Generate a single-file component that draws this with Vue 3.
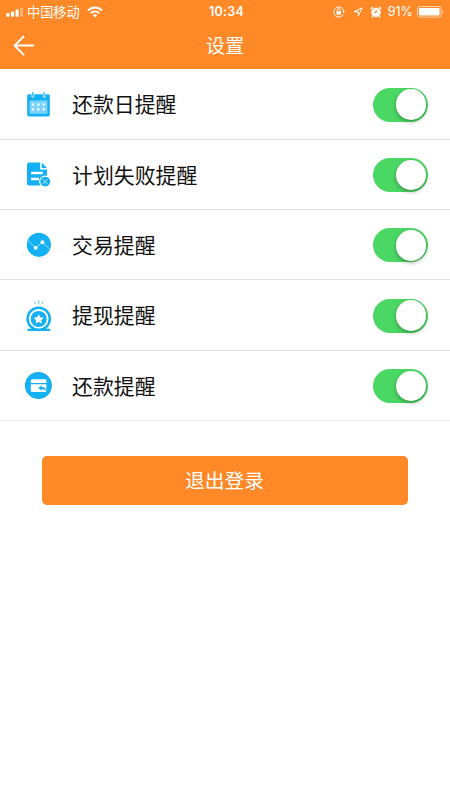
<script setup>
import { ref } from 'vue'

const rows = ref([
  { icon: 'calendar', label: '还款日提醒', on: true },
  { icon: 'plan', label: '计划失败提醒', on: true },
  { icon: 'trade', label: '交易提醒', on: true },
  { icon: 'withdraw', label: '提现提醒', on: true },
  { icon: 'repay', label: '还款提醒', on: true },
])
</script>

<template>
  <div class="screen">
    <header class="header">
      <div class="status">
        <div class="side">
          <svg class="signal" width="18" height="10" viewBox="0 0 18 10">
            <g fill="#fff">
              <rect x="0.3" y="6" width="3.2" height="3.8" rx="0.8" />
              <rect x="4.9" y="4.6" width="3.2" height="5.2" rx="0.8" />
              <rect x="9.5" y="2.6" width="3.2" height="7.2" rx="0.8" />
              <rect x="14.1" y="0.4" width="3" height="9.4" rx="0.8" opacity=".35" />
            </g>
          </svg>
          <span class="carrier">中国移动</span>
          <svg class="wifi" width="16" height="12" viewBox="0 0 16 12" fill="none" stroke="#fff" stroke-width="2">
            <path d="M1 4.6C5 .6 11 .6 15 4.6" />
            <path d="M3.8 7.3c2.4-2.3 6-2.3 8.4 0" />
            <path d="M5.8 9 8 11.4 10.2 9C9 7.9 7 7.9 5.8 9Z" fill="#fff" stroke="none" />
          </svg>
        </div>
        <span class="time">10:34</span>
        <div class="side right">
          <svg width="12" height="12" viewBox="0 0 12 12" fill="none" stroke="#fff">
            <path d="M10.2 8.4A5 5 0 1 1 10.6 4.6" />
            <path d="M9.2 5h2.8l-1.4 2Z" fill="#fff" stroke="none" />
            <rect x="3.5" y="5.2" width="4.4" height="3.4" fill="#fff" stroke="none" />
            <path d="M4.3 5.4V4a1.4 1.4 0 0 1 2.8 0v1.4" stroke-width=".9" />
          </svg>
          <svg class="arrow" width="10" height="10" viewBox="0 0 10 10" fill="none" stroke="#fff" stroke-linejoin="round">
            <path d="M9.2.8.8 4.7h4.4v4.4Z" />
          </svg>
          <svg class="alarm" width="12" height="12" viewBox="0 0 12 12">
            <circle cx="6" cy="6.4" r="4.7" fill="#fff" />
            <path d="M.8 3 3 1M11.2 3 9 1M3 10.2l-1 1.2M9 10.2l1 1.2" stroke="#fff" stroke-width="1.5" />
            <path d="M6.2 3.6v3H3.8" fill="none" stroke="#ff8827" />
          </svg>
          <span class="percent">91%</span>
          <svg class="battery" width="28" height="12" viewBox="0 0 28 12">
            <rect x=".5" y=".5" width="23.6" height="10.6" rx="2" fill="none" stroke="#fff" stroke-opacity=".65" />
            <rect x="2" y="2" width="20.6" height="7.6" rx=".8" fill="#fff" />
            <path d="M25.3 4c1.5.4 1.5 3.2 0 3.6Z" fill="#fff" opacity=".6" />
          </svg>
        </div>
      </div>
      <div class="nav">
        <svg class="back" width="22" height="22" viewBox="0 0 22 22" fill="none" stroke="#fff" stroke-width="2" stroke-linecap="round" stroke-linejoin="round">
          <path d="M11.5 1.6 2.6 10.6l8.9 9M2.6 10.6h18.7" />
        </svg>
        <h1 class="title">设置</h1>
      </div>
    </header>

    <main>
      <div v-for="row in rows" :key="row.icon" class="row">
        <svg class="icon" width="30" height="30" viewBox="0 0 30 30">
          <g v-if="row.icon === 'calendar'">
            <rect x="4.2" y="4.2" width="22.6" height="22.2" rx="1.6" fill="#13b1f3" />
            <rect x="6.6" y="10.4" width="17.8" height="13.4" rx=".6" fill="#7dd3f8" />
            <g fill="#e6f8ff">
              <circle v-for="n in 6" :key="n" :cx="10 + ((n - 1) % 3) * 5.4" :cy="n > 3 ? 19.4 : 14.6" r="1.3" />
            </g>
            <path d="M9.8 3.6v2.8M21.2 3.6v2.8" stroke="#d9f4ff" stroke-width="2.8" stroke-linecap="round" />
            <path d="M9.8 2.8v3.2M21.2 2.8v3.2" stroke="#4fc2f4" stroke-width="1.7" stroke-linecap="round" />
          </g>
          <g v-else-if="row.icon === 'plan'">
            <path d="M6 2.6h11.2v6.8h6.8v16H6a2 2 0 0 1-2-2V4.6a2 2 0 0 1 2-2Z" fill="#13b1f3" />
            <path d="m18.8 2.8 5.2 5.2h-5.2Z" fill="#13b1f3" />
            <path d="M8 13h11.8M8 19h8" stroke="#fff" stroke-width="2.3" />
            <circle cx="22.2" cy="21.6" r="5.5" fill="#13b1f3" stroke="#fff" stroke-width="1.1" />
            <path d="m19.8 19.2 4.8 4.8m0-4.8L19.8 24" stroke="#b5e8fc" stroke-width="1" />
          </g>
          <g v-else-if="row.icon === 'trade'">
            <circle cx="15.9" cy="14.8" r="12.1" fill="#13b1f3" />
            <path d="m4.8 10.4 7.9 7.4 6.6-5.6 7.2 6.8" fill="none" stroke="#a5e2fb" stroke-width=".9" />
            <circle cx="12.7" cy="17.8" r="1.9" fill="#fff" />
            <circle cx="19.4" cy="12.2" r="1.9" fill="#fff" />
          </g>
          <g v-else-if="row.icon === 'withdraw'">
            <path d="M5 29.6v-1.2h3v-1.2h15.4v1.2h3v1.2Z" fill="#13b1f3" />
            <circle cx="15.7" cy="17.8" r="11.1" fill="#fff" stroke="#13b1f3" stroke-width="2.5" />
            <circle cx="15.7" cy="18" r="8" fill="#13b1f3" />
            <path d="m15.7 13.2 1.6 3.1 3.4.5-2.4 2.4.5 3.4-3.1-1.6-3.1 1.6.5-3.4-2.4-2.4 3.4-.5Z" fill="#fff" />
            <path d="M15.7-.8v4M11.4.8l.9 2.2M20 .8l-.9 2.2" stroke="#58c8f5" stroke-width="1" />
            <path d="M5.2 28.8h21.2" stroke="#13b1f3" stroke-width="2.2" stroke-linecap="round" />
          </g>
          <g v-else>
            <circle cx="15.4" cy="14.5" r="13.5" fill="#13b1f3" />
            <path d="M9.2 8.3h12.8a1.4 1.4 0 0 1 1.4 1.4V12H7.8V9.7a1.4 1.4 0 0 1 1.4-1.4Z" fill="#fff" />
            <path d="M7.8 13.3h15.6v6.4a1.4 1.4 0 0 1-1.4 1.4H9.2a1.4 1.4 0 0 1-1.4-1.4Z" fill="#fff" />
            <path d="m15.2 17 3.5-2.5V16c2.8.1 4.4 1.3 4.8 4.1-1.4-1.5-2.8-1.9-4.8-1.8v1.2Z" fill="#13b1f3" />
          </g>
        </svg>
        <span class="label">{{ row.label }}</span>
        <button class="switch" :class="{ on: row.on }" role="switch" :aria-checked="row.on" @click="row.on = !row.on">
          <span class="knob"></span>
        </button>
      </div>
      <button class="logout">退出登录</button>
    </main>
  </div>
</template>

<style>
body {
  margin: 0;
  background: #fff;
}
</style>

<style scoped>
.screen {
  width: 450px;
  height: 800px;
  overflow: hidden;
  background: #fff;
  font-family: "Liberation Sans", "Noto Sans CJK SC", sans-serif;
}
svg {
  display: block;
  flex: none;
  overflow: visible;
}
.header {
  height: 69.4px;
  background: #ff8827;
  color: #fff;
}
.status {
  display: grid;
  grid-template-columns: 1fr auto 1fr;
  align-items: center;
  height: 22px;
  padding: 0 5px 0 6px;
}
.side {
  display: flex;
  align-items: center;
  height: 22px;
}
.right {
  justify-content: flex-end;
}
.signal {
  margin-top: 1px;
}
.carrier {
  margin-left: 3px;
  font: 13.2px/22px "Noto Sans CJK SC", sans-serif;
}
.wifi {
  margin-left: 7px;
}
.time {
  padding: 1px 0 0 2px;
  font: 600 12.5px/22px Inter, sans-serif;
  letter-spacing: 0.25px;
}
.arrow {
  margin-left: 8px;
}
.alarm {
  margin-left: 7px;
}
.percent {
  margin-left: 6px;
  padding-top: 1px;
  font: 12.6px/22px Inter, sans-serif;
}
.battery {
  margin-left: 4px;
}
.nav {
  display: grid;
  grid-template-columns: 22px 1fr 22px;
  align-items: center;
  height: 47px;
  padding: 0 12px;
}
.title {
  margin: 0;
  text-align: center;
  font: 400 19.3px/47px "Noto Sans CJK SC", sans-serif;
}
.row {
  display: flex;
  align-items: center;
  box-sizing: border-box;
  height: 70.35px;
  padding: 1px 22px 0 23px;
  border-bottom: 1px solid #dedede;
}
.row:nth-child(5) {
  border-bottom-color: #ececec;
}
.label {
  flex: 1;
  margin: 0 0 2.4px 19px;
  color: #111;
  font: 20.9px/30px "Noto Sans CJK SC", sans-serif;
}
.switch {
  display: flex;
  align-items: center;
  box-sizing: border-box;
  width: 55.5px;
  height: 34px;
  padding: 0 1.6px;
  border: 0;
  border-radius: 17px;
  background: #ddd;
}
.switch.on {
  justify-content: flex-end;
  background: #4bd763;
}
.knob {
  width: 30.6px;
  height: 30.6px;
  border-radius: 50%;
  background: #fff;
  box-shadow: 0 2px 4px rgba(0, 0, 0, 0.3);
}
.logout {
  display: block;
  width: 366px;
  height: 49px;
  margin: 35.2px 0 0 42px;
  padding: 0 1px 1px 0;
  border: 0;
  border-radius: 5px;
  background: #ff8827;
  color: #fff;
  font: 19.8px/46px "Noto Sans CJK SC", sans-serif;
}
</style>
